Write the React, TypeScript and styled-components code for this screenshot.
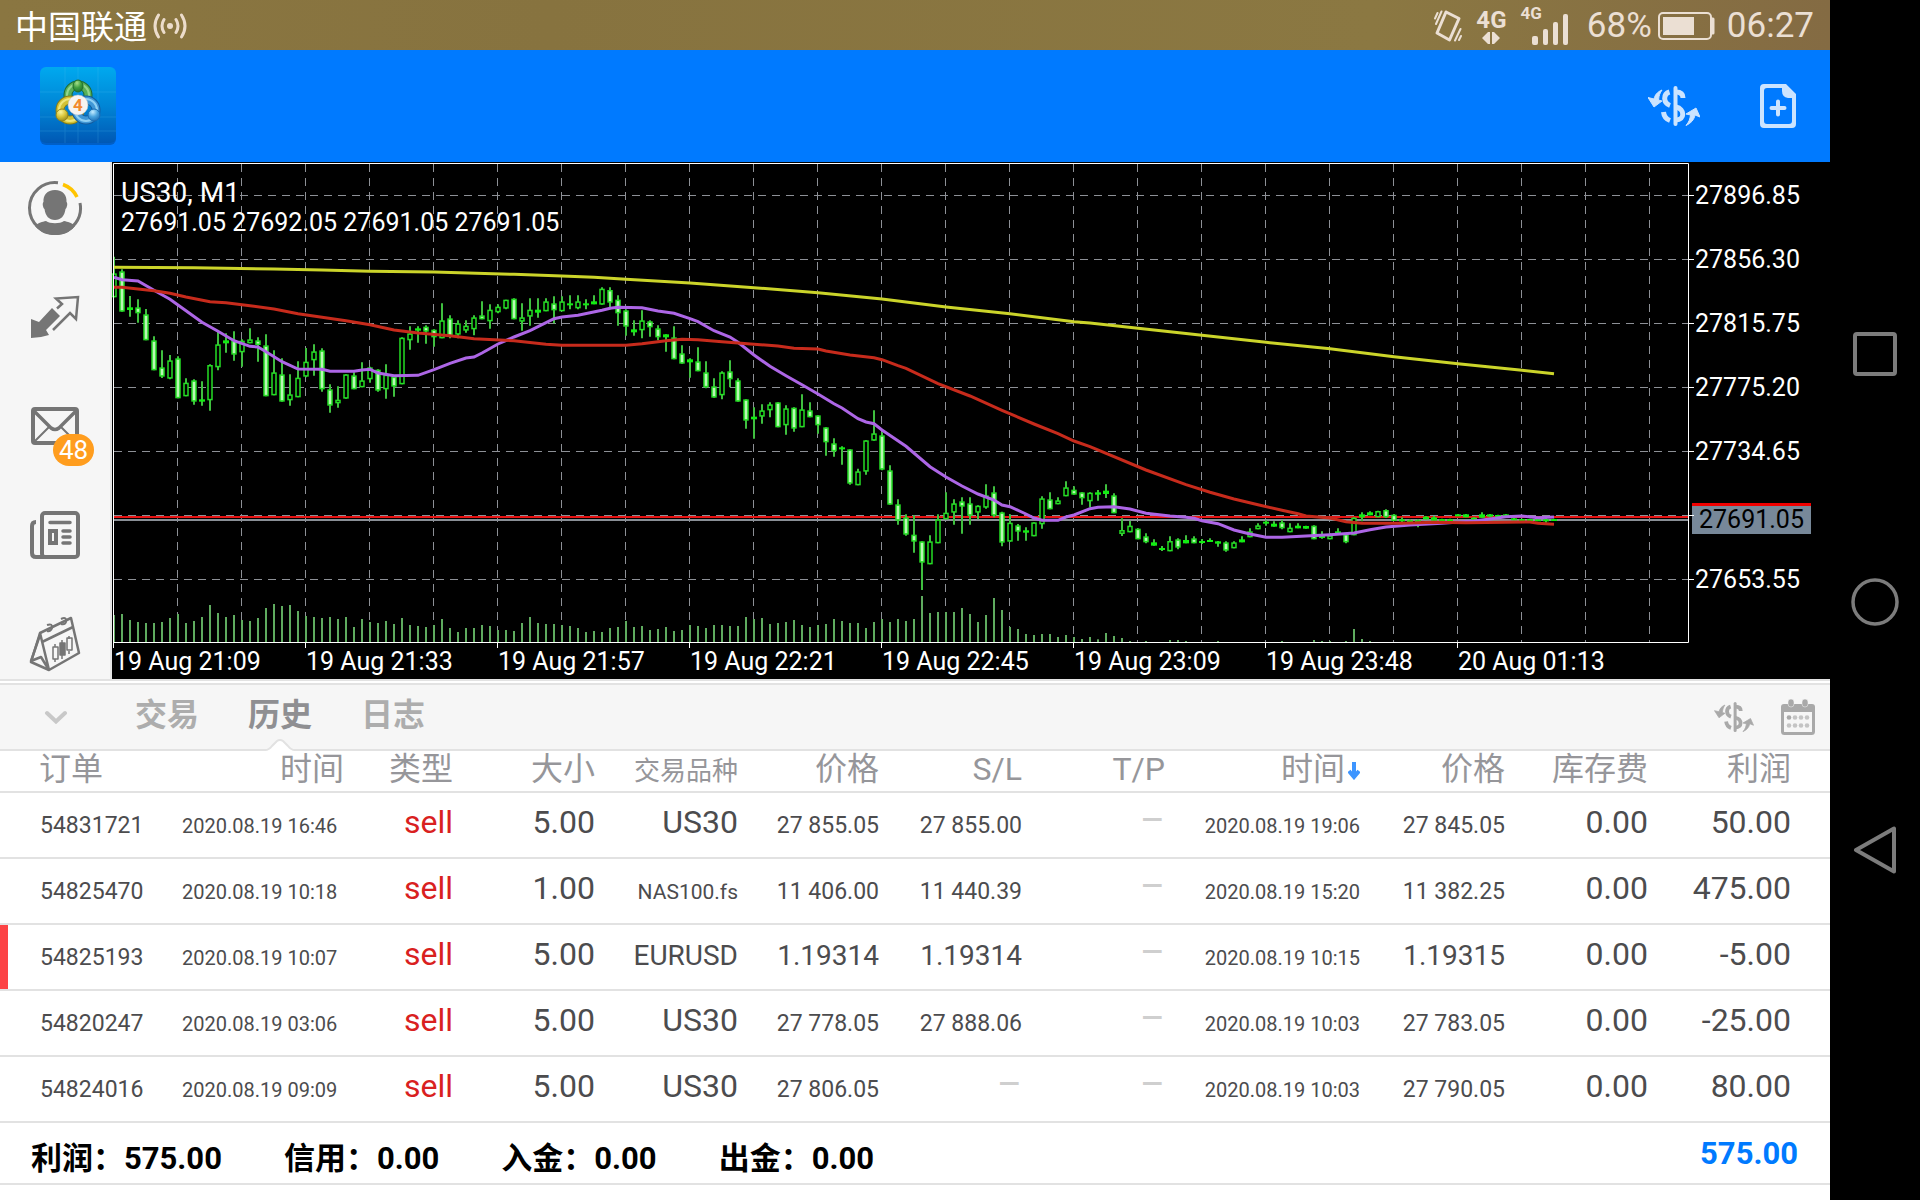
import React from "react";
import styled, { createGlobalStyle } from "styled-components";

const GlobalStyle = createGlobalStyle`
  * { box-sizing: border-box; }
  body {
    margin: 0;
    background: #000;
    font-family: Roboto, "Noto Sans CJK SC", sans-serif;
  }
  button {
    padding: 0;
    border: 0;
    background: none;
    color: inherit;
    font: inherit;
    cursor: pointer;
  }
  svg { display: block; }
`;

/* ---------- chart data ---------- */

// [high, body top, body bottom, low, kind]; levels count down from the top of
// the price pane, three to a pixel. f = falling, h = rising, s = flat.
type Kind = "f" | "h" | "s";
type Candle = [number, number, number, number, Kind];

const candles: Candle[] = [
  [20, 70, 142, 142, "h"], [58, 64, 185, 185, "f"], [138, 172, 180, 200, "s"], [148, 172, 190, 218, "f"],
  [177, 193, 271, 271, "f"], [259, 271, 361, 361, "f"], [301, 352, 380, 384, "f"], [315, 331, 386, 388, "h"],
  [319, 325, 445, 445, "f"], [385, 398, 439, 439, "h"], [388, 391, 455, 464, "f"], [394, 448, 455, 467, "s"],
  [343, 345, 451, 482, "h"], [245, 283, 352, 361, "h"], [250, 271, 280, 308, "s"], [244, 272, 314, 332, "f"],
  [268, 272, 307, 350, "h"], [235, 268, 280, 280, "h"], [262, 271, 285, 335, "f"], [253, 286, 439, 439, "f"],
  [301, 367, 436, 436, "h"], [325, 373, 455, 455, "f"], [373, 433, 451, 467, "h"], [334, 383, 442, 442, "h"],
  [294, 335, 380, 382, "h"], [283, 304, 331, 377, "h"], [295, 301, 418, 425, "f"], [403, 418, 467, 488, "f"],
  [409, 449, 460, 473, "h"], [373, 373, 446, 446, "h"], [367, 376, 418, 418, "f"], [337, 391, 412, 412, "h"],
  [350, 352, 388, 398, "h"], [358, 359, 422, 425, "f"], [343, 374, 418, 446, "h"], [377, 380, 410, 440, "f"],
  [262, 263, 403, 403, "h"], [229, 250, 271, 299, "h"], [229, 235, 242, 278, "s"], [226, 230, 245, 281, "f"],
  [238, 239, 262, 290, "f"], [160, 211, 265, 265, "h"], [196, 205, 260, 265, "f"], [211, 220, 254, 265, "h"],
  [211, 227, 242, 248, "h"], [196, 202, 238, 256, "h"], [154, 196, 208, 208, "f"], [163, 179, 214, 236, "h"],
  [163, 170, 187, 190, "h"], [149, 149, 176, 178, "h"], [145, 146, 208, 208, "f"], [160, 202, 215, 242, "h"],
  [145, 179, 200, 227, "h"], [145, 179, 188, 203, "s"], [145, 154, 184, 184, "h"], [139, 160, 181, 220, "f"],
  [139, 154, 184, 184, "h"], [136, 160, 166, 178, "s"], [136, 154, 175, 178, "h"], [148, 160, 166, 178, "s"],
  [136, 154, 163, 163, "s"], [112, 116, 164, 164, "h"], [112, 120, 158, 178, "f"], [136, 149, 190, 227, "f"],
  [178, 181, 230, 257, "f"], [211, 238, 247, 257, "s"], [181, 211, 241, 265, "h"], [211, 214, 232, 260, "f"],
  [226, 235, 262, 271, "f"], [253, 253, 262, 305, "s"], [229, 262, 328, 328, "f"], [286, 310, 341, 341, "f"],
  [325, 328, 337, 383, "s"], [292, 334, 364, 364, "f"], [334, 367, 412, 415, "f"], [385, 409, 443, 443, "f"],
  [364, 367, 436, 448, "h"], [331, 364, 388, 412, "f"], [385, 391, 455, 455, "f"], [448, 448, 512, 536, "f"],
  [472, 500, 508, 566, "s"], [463, 481, 500, 521, "h"], [457, 463, 481, 502, "h"], [457, 457, 532, 532, "f"],
  [466, 475, 526, 554, "h"], [472, 473, 536, 545, "f"], [433, 478, 532, 532, "h"], [457, 481, 502, 502, "f"],
  [496, 496, 526, 551, "f"], [532, 532, 577, 617, "f"], [565, 580, 604, 620, "f"], [589, 592, 597, 644, "s"],
  [598, 598, 701, 704, "f"], [656, 664, 706, 706, "h"], [571, 571, 665, 674, "h"], [481, 550, 572, 572, "h"],
  [547, 556, 659, 661, "f"], [646, 661, 764, 764, "f"], [748, 763, 812, 824, "f"], [793, 802, 854, 857, "f"],
  [796, 854, 875, 908, "f"], [874, 874, 938, 1020, "f"], [856, 874, 943, 943, "h"], [793, 808, 880, 880, "h"],
  [727, 788, 808, 808, "h"], [748, 760, 788, 824, "h"], [742, 754, 770, 851, "f"], [742, 760, 797, 824, "f"],
  [766, 767, 788, 808, "h"], [703, 736, 773, 776, "h"], [709, 727, 797, 802, "f"], [785, 787, 878, 889, "f"],
  [793, 818, 875, 875, "h"], [822, 826, 845, 872, "f"], [832, 841, 848, 872, "s"], [817, 817, 859, 859, "h"],
  [739, 745, 823, 836, "h"], [727, 748, 778, 778, "f"], [742, 751, 763, 763, "h"], [694, 712, 739, 739, "h"],
  [709, 719, 734, 734, "f"], [727, 727, 745, 764, "f"], [727, 728, 754, 772, "h"], [720, 727, 734, 752, "s"],
  [703, 722, 732, 744, "s"], [730, 736, 790, 790, "f"], [805, 840, 852, 858, "h"], [813, 827, 847, 847, "h"],
  [835, 836, 868, 868, "f"], [850, 859, 877, 880, "f"], [868, 877, 887, 887, "s"], [888, 894, 899, 903, "s"],
  [859, 873, 904, 904, "h"], [865, 868, 893, 898, "f"], [856, 870, 880, 880, "s"], [859, 865, 880, 880, "f"],
  [867, 873, 879, 882, "s"], [865, 870, 875, 875, "s"], [873, 874, 881, 890, "s"], [874, 877, 902, 905, "f"],
  [874, 877, 895, 895, "h"], [859, 868, 877, 877, "s"], [835, 844, 862, 862, "h"], [820, 826, 838, 838, "h"],
  [811, 815, 821, 827, "s"], [814, 821, 830, 830, "s"], [810, 817, 835, 838, "f"], [820, 833, 847, 847, "h"],
  [820, 827, 835, 835, "s"], [827, 828, 836, 836, "s"], [826, 827, 868, 868, "f"], [844, 858, 863, 866, "s"],
  [850, 856, 868, 868, "h"], [835, 844, 849, 852, "s"], [850, 852, 877, 880, "f"], [802, 803, 856, 856, "h"],
  [787, 793, 802, 814, "s"], [784, 787, 796, 796, "s"], [782, 783, 802, 802, "h"], [778, 780, 802, 804, "f"],
  [792, 794, 813, 813, "f"], [802, 808, 814, 816, "s"], [808, 811, 815, 816, "s"], [808, 811, 815, 832, "s"],
  [798, 800, 808, 808, "s"], [798, 802, 812, 812, "s"], [806, 807, 811, 811, "s"], [806, 808, 811, 811, "s"],
  [792, 793, 798, 798, "s"], [792, 793, 802, 802, "s"], [802, 803, 808, 808, "s"], [787, 793, 803, 803, "s"],
  [792, 793, 800, 802, "s"], [794, 795, 798, 798, "s"], [792, 793, 797, 797, "s"], [804, 805, 811, 811, "s"],
  [806, 807, 810, 810, "s"], [806, 807, 810, 810, "s"], [806, 808, 812, 812, "s"], [804, 808, 814, 818, "s"],
  [806, 807, 811, 811, "s"],
];

// Height of each volume bar, three to a pixel.
const volumes = [
  81, 84, 66, 60, 57, 57, 60, 72, 84, 57, 63, 75, 111, 87, 75, 81, 66, 63, 72, 102, 114, 108, 111, 93, 78, 75, 72, 75,
  69, 75, 45, 69, 60, 57, 63, 54, 72, 51, 48, 45, 51, 69, 42, 30, 42, 42, 51, 48, 36, 36, 33, 57, 75, 57, 54, 54, 51,
  48, 42, 30, 33, 30, 42, 45, 63, 45, 48, 36, 39, 45, 33, 36, 51, 48, 42, 51, 51, 48, 48, 75, 69, 72, 54, 57, 60, 66,
  51, 45, 51, 54, 69, 63, 57, 57, 42, 60, 69, 60, 69, 63, 69, 138, 87, 90, 90, 90, 102, 84, 60, 81, 132, 96, 45, 39,
  24, 21, 24, 24, 15, 21, 15, 9, 15, 8, 27, 18, 12, 3, 0, 3, 0, 0, 6, 6, 3, 0, 0, 0, 3, 0, 0, 0, 0, 0, 0, 0, 3, 0, 0,
  0, 6, 3, 3, 0, 3, 39, 9, 3,
];

// Moving averages as [bar, level] pairs.
type Points = [number, number][];

const slowAverage: Points = [
  [0, 52], [10, 53], [20, 57], [26, 60], [32, 64], [40, 66], [50, 73], [56, 78], [60, 82], [64, 88], [72, 99],
  [80, 113], [88, 128], [96, 147], [104, 171], [112, 191], [120, 215], [122, 219], [144, 277], [152, 296],
  [160, 320], [168, 341], [176, 361], [180, 371],
];

const middleAverage: Points = [
  [0, 112], [1, 112], [3, 117], [5, 122], [7, 130], [9, 141], [12, 155], [14, 158], [17, 167], [20, 177], [23, 191],
  [26, 202], [29, 212], [32, 224], [35, 240], [38, 249], [42, 257], [45, 266], [50, 272], [54, 283], [56, 286],
  [64, 286], [66, 281], [69, 272], [71, 268], [73, 269], [76, 275], [80, 283], [83, 288], [85, 295], [88, 297],
  [89, 303], [92, 315], [95, 323], [96, 329], [98, 347], [99, 355], [103, 401], [107, 438], [111, 481], [115, 522],
  [118, 551], [120, 573], [122, 590], [129, 660], [134, 704], [137, 727], [140, 747], [143, 764], [146, 781],
  [148, 791], [149, 798], [152, 804], [154, 815], [156, 820], [161, 820], [165, 817], [169, 818], [177, 816],
  [178, 820], [180, 823],
];

const fastAverage: Points = [
  [0, 82], [1, 89], [3, 93], [5, 121], [7, 148], [9, 182], [11, 217], [13, 244], [15, 272], [17, 289], [18, 291],
  [19, 305], [21, 335], [23, 357], [26, 358], [27, 364], [30, 364], [31, 360], [32, 358], [33, 369], [35, 377],
  [38, 376], [40, 359], [42, 340], [44, 324], [45, 321], [46, 309], [48, 282], [50, 261], [52, 242], [55, 206],
  [56, 201], [58, 196], [61, 181], [62, 175], [63, 172], [66, 173], [68, 183], [70, 190], [72, 206], [73, 215],
  [74, 229], [75, 242], [77, 261], [78, 277], [80, 315], [82, 349], [84, 377], [86, 404], [88, 432], [90, 461],
  [91, 474], [93, 506], [94, 516], [95, 521], [96, 540], [99, 589], [102, 650], [104, 681], [106, 708], [108, 732],
  [110, 750], [111, 765], [112, 770], [114, 792], [115, 804], [116, 811], [118, 811], [119, 801], [120, 795],
  [122, 776], [123, 772], [125, 770], [127, 777], [129, 790], [132, 798], [134, 802], [135, 805], [136, 812],
  [138, 821], [140, 840], [142, 852], [144, 862], [146, 862], [149, 858], [152, 854], [155, 849], [157, 839],
  [159, 831], [162, 825], [166, 820], [170, 813], [172, 807], [174, 800], [176, 798], [178, 803], [180, 801],
];

const PLOT_W = 1582;
const PLOT_H = 486;
const FRAME_RIGHT = 1577;
const FRAME_BOTTOM = 480;
const barX = (i: number) => 2 + 8 * i;
const levelY = (level: number) => 88 + level / 3;
const linePoints = (pts: Points) => pts.map(([i, v]) => `${barX(i)},${levelY(v).toFixed(1)}`).join(" ");
const range = (n: number) => Array.from({ length: n }, (_, i) => i);

const priceLabels = ["27896.85", "27856.30", "27815.75", "27775.20", "27734.65", null, "27653.55"];
const timeLabels = [
  "19 Aug 21:09", "19 Aug 21:33", "19 Aug 21:57", "19 Aug 22:21",
  "19 Aug 22:45", "19 Aug 23:09", "19 Aug 23:48", "20 Aug 01:13",
];

/* ---------- order data ---------- */

type Order = {
  id: string; opened: string; size: string; symbol: string; open: string; sl: string | null;
  closed: string; close: string; profit: string; loss?: boolean;
};

const orders: Order[] = [
  { id: "54831721", opened: "2020.08.19 16:46", size: "5.00", symbol: "US30", open: "27 855.05", sl: "27 855.00", closed: "2020.08.19 19:06", close: "27 845.05", profit: "50.00" },
  { id: "54825470", opened: "2020.08.19 10:18", size: "1.00", symbol: "NAS100.fs", open: "11 406.00", sl: "11 440.39", closed: "2020.08.19 15:20", close: "11 382.25", profit: "475.00" },
  { id: "54825193", opened: "2020.08.19 10:07", size: "5.00", symbol: "EURUSD", open: "1.19314", sl: "1.19314", closed: "2020.08.19 10:15", close: "1.19315", profit: "-5.00", loss: true },
  { id: "54820247", opened: "2020.08.19 03:06", size: "5.00", symbol: "US30", open: "27 778.05", sl: "27 888.06", closed: "2020.08.19 10:03", close: "27 783.05", profit: "-25.00" },
  { id: "54824016", opened: "2020.08.19 09:09", size: "5.00", symbol: "US30", open: "27 806.05", sl: null, closed: "2020.08.19 10:03", close: "27 790.05", profit: "80.00" },
];

const columnWidths = [182, 162, 109, 142, 143, 141, 143, 143, 195, 145, 143, 182];

const summary = [
  ["利润", "575.00"],
  ["信用", "0.00"],
  ["入金", "0.00"],
  ["出金", "0.00"],
];

/* ---------- layout ---------- */

const Device = styled.div`
  display: grid;
  grid-template-columns: minmax(0, 1fr) 90px;
  min-height: 100vh;
  background: #000;
`;

const Screen = styled.div`
  display: flex;
  flex-direction: column;
  min-width: 0;
  background: #fff;
`;

const StatusBar = styled.div`
  display: flex;
  align-items: center;
  justify-content: space-between;
  height: 50px;
  padding: 2px 16px 0 15px;
  background: linear-gradient(90deg, #8a7641, #87733f 30%, #8b7842 75%, #846b43);
  color: #ebdfd3;
  font-size: 35px;
  line-height: 40px;
`;

const StatusGroup = styled.div`
  display: flex;
  align-items: center;
  gap: 6px;
`;

const Carrier = styled.span`
  padding-top: 4px;
  color: #fff;
  font-size: 33px;
`;

const StatusIcons = styled.div`
  display: flex;
  align-items: center;
  gap: 14px;
  margin-right: 13px;
`;

const BatteryGroup = styled.div`
  display: flex;
  align-items: center;
  gap: 6px;
  margin-right: 6px;
`;

const AppBar = styled.header`
  display: flex;
  align-items: center;
  justify-content: space-between;
  height: 112px;
  padding: 0 34px 0 40px;
  background: #007aff;
`;

const AppActions = styled.div`
  display: flex;
  align-items: center;
  gap: 60px;
  color: #cce4ff;
`;

const Workspace = styled.div`
  display: grid;
  grid-template-columns: 112px minmax(0, 1fr);
`;

const Sidebar = styled.nav`
  display: flex;
  flex-direction: column;
  align-items: center;
  gap: 53px;
  padding-top: 18px;
  border-right: 2px solid #e6e6e6;
  background: #f6f6f6;
  color: #757575;
`;

const SideButton = styled.button`
  position: relative;
  height: 56px;
`;

const Badge = styled.span`
  position: absolute;
  left: 26px;
  top: 36px;
  min-width: 41px;
  padding: 0 6px;
  border-radius: 16px;
  background: #ff9d1e;
  color: #fff;
  font-size: 26px;
  line-height: 32px;
`;

const ChartPanel = styled.section`
  display: grid;
  grid-template-columns: minmax(0, 1fr) 136px;
  grid-template-rows: auto 31px;
  background: #000;
  color: #fff;
  font-size: 25px;
`;

const Plot = styled.div`
  position: relative;
  svg { width: 100%; height: ${PLOT_H}px; }
`;

const ChartTitle = styled.div`
  position: absolute;
  left: 9px;
  top: 16px;
  line-height: 30px;
`;

const SymbolName = styled.div`
  font-size: 28px;
`;

const PriceAxis = styled.div`
  display: flex;
  flex-direction: column;
  padding: 2px 0 0 1px;
`;

const PriceLabel = styled.div`
  height: 64px;
  line-height: 64px;
`;

const PriceSlot = styled.div`
  display: flex;
  height: 64px;
  padding-top: 19px;
`;

const PriceMarker = styled.div`
  height: 31px;
  margin-left: -3px;
  padding: 0 7px;
  border-top: 3px solid #f00000;
  background: #778899;
  color: #000;
  line-height: 28px;
`;

const TimeAxis = styled.div`
  display: grid;
  grid-template-columns: repeat(8, 192px);
  padding-left: 2px;
  line-height: 28px;
  white-space: nowrap;
`;

const HistoryPanel = styled.section`
  flex: 1;
  padding-top: 2px;
  border-top: 2px solid #e2e2e2;
`;

const TabBar = styled.div`
  display: flex;
  align-items: center;
  height: 68px;
  padding: 0 15px 0 44px;
  border-top: 2px solid #e2e2e2;
  border-bottom: 2px solid #e2e2e2;
  background: #f6f6f6;
  color: #c8c8c8;
`;

const Tabs = styled.div`
  display: flex;
  flex: 1;
  align-self: stretch;
  gap: 49px;
  margin-left: 67px;
`;

const Tab = styled.button<{ $active?: boolean }>`
  position: relative;
  padding-bottom: 4px;
  color: ${(p) => (p.$active ? "#8f8f92" : "#adadad")};
  font-size: 32px;
  font-weight: 700;
  line-height: 40px;
`;

const Notch = styled.svg`
  position: absolute;
  left: 17px;
  bottom: -2px;
`;

const TabActions = styled.div`
  display: flex;
  align-items: center;
  gap: 27px;
  color: #a9a9a9;
`;

const OrderTable = styled.table`
  width: 100%;
  table-layout: fixed;
  border-collapse: separate;
  border-spacing: 0;
  color: #4c4c4e;
`;

const HeadCell = styled.th<{ $align?: string; $size?: number }>`
  height: 42px;
  padding: 1px 0 3px;
  border-bottom: 2px solid #e2e2e2;
  color: #96969a;
  font-size: ${(p) => p.$size ?? 32}px;
  font-weight: 400;
  line-height: 34px;
  text-align: ${(p) => p.$align ?? "right"};
  vertical-align: baseline;
  white-space: nowrap;
  &:first-child { padding-left: 39px; }
  &:last-child { padding-right: 39px; }
`;

const SortArrow = styled.svg`
  display: inline-block;
  margin-left: 3px;
`;

const Cell = styled.td<{ $align?: string; $size?: number; $tone?: string }>`
  padding: 9px 0 15px;
  border-bottom: 2px solid #e2e2e2;
  color: ${(p) => p.$tone ?? "inherit"};
  font-size: ${(p) => p.$size ?? 32}px;
  line-height: ${(p) => (p.$size ? 24 : 40)}px;
  text-align: ${(p) => p.$align ?? "right"};
  vertical-align: baseline;
  white-space: nowrap;
  &:last-child { padding-right: 39px; }
`;

const OrderCell = styled(Cell)<{ $loss?: boolean }>`
  padding-left: 40px;
  box-shadow: ${(p) => (p.$loss ? "inset 8px 0 0 #fc4345" : "none")};
`;

const Summary = styled.footer`
  display: flex;
  gap: 62px;
  height: 62px;
  padding: 13px 32px 0 31px;
  border-bottom: 2px solid #e2e2e2;
  color: #000;
  font-size: 31px;
  font-weight: 700;
  line-height: 46px;
`;

const Total = styled.span`
  margin-left: auto;
  color: #007aff;
  line-height: 36px;
`;

const SystemNav = styled.nav`
  display: flex;
  flex-direction: column;
  align-items: center;
  justify-content: center;
  gap: 200px;
  padding-top: 4px;
  color: #7c7c7c;
`;

/* ---------- icons ---------- */

const BroadcastIcon = () => (
  <svg width="34" height="28" viewBox="0 0 34 28" fill="none" stroke="#ecdccb" strokeWidth="3" strokeLinecap="round">
    <circle cx="17" cy="14" r="3" fill="#ecdccb" stroke="none" />
    <path d="M11 7.500Q7 14 11 20.500M23 7.500Q27 14 23 20.500M5.500 3Q-1.500 14 5.500 25M28.500 3Q35.500 14 28.500 25" />
  </svg>
);

const VibrateIcon = () => (
  <svg width="28" height="34" viewBox="0 0 28 34" fill="none" stroke="currentColor" strokeLinecap="round" strokeLinejoin="round">
    <path d="M12 3L25 9.500L15.500 31L3 24Z" strokeWidth="3" />
    <path d="M7.500 2.500L2 15M3.500 4L1 9.500M26.500 20L21 31.500M27 27L25 31" strokeWidth="2" />
  </svg>
);

const Network = styled.div`
  display: flex;
  flex-direction: column;
  align-items: center;
  font-size: 24px;
  font-weight: 700;
  line-height: 24px;
`;

const DataArrows = () => (
  <svg width="20" height="12" viewBox="0 0 20 12" fill="currentColor">
    <path d="M1 6L7 0H9V12H7ZM11 0H13L19 6L13 12H11Z" />
  </svg>
);

const Signal = styled.div`
  display: flex;
  align-items: flex-end;
  height: 40px;
  font-size: 17px;
  font-weight: 700;
`;

const SignalLabel = styled.span`
  align-self: flex-start;
  margin-right: -10px;
  line-height: 14px;
`;

const SignalBars = () => (
  <svg width="36" height="32" viewBox="0 0 36 32" fill="currentColor">
    <rect x="0" y="22" width="6" height="9" rx="2" />
    <rect x="11" y="15" width="5" height="16" rx="2" />
    <rect x="21" y="8" width="5" height="23" rx="2" />
    <rect x="31" y="0" width="5" height="31" rx="2" />
  </svg>
);

const BatteryIcon = () => (
  <svg width="57" height="28" viewBox="0 0 57 28" fill="none" stroke="currentColor" strokeWidth="2">
    <rect x="1" y="1" width="52" height="26" rx="4" />
    <rect x="5" y="5" width="31" height="18" fill="currentColor" stroke="none" />
    <path d="M53 7H55V21H53" strokeWidth="3" strokeLinejoin="round" />
  </svg>
);

const LogoIcon = () => (
  <svg width="76" height="78" viewBox="0 0 76 78" role="img" aria-label="MetaTrader 4">
    <defs>
      <linearGradient id="sky" x1="0" y1="0" x2="0" y2="1">
        <stop offset="0" stopColor="#00a9ef" />
        <stop offset="0.500" stopColor="#0086d6" />
        <stop offset="1" stopColor="#0058b4" />
      </linearGradient>
      <radialGradient id="green" cx="0.400" cy="0.250" r="0.800">
        <stop offset="0" stopColor="#a8e08a" />
        <stop offset="0.500" stopColor="#3f9f3f" />
        <stop offset="1" stopColor="#1f6f2c" />
      </radialGradient>
      <radialGradient id="gold" cx="0.400" cy="0.250" r="0.800">
        <stop offset="0" stopColor="#fbf6a0" />
        <stop offset="0.500" stopColor="#d9c63a" />
        <stop offset="1" stopColor="#93861c" />
      </radialGradient>
      <radialGradient id="blue" cx="0.400" cy="0.250" r="0.800">
        <stop offset="0" stopColor="#c4ecff" />
        <stop offset="0.500" stopColor="#4aa4de" />
        <stop offset="1" stopColor="#1c6db4" />
      </radialGradient>
    </defs>
    <rect y="2" width="76" height="76" rx="6" fill="#00438f" opacity="0.500" />
    <rect width="76" height="76" rx="6" fill="url(#sky)" />
    <path d="M0 25H76M0 50H76M0 64H76M25 0V76M38 0V76M58 0V76" stroke="#5ec4f2" opacity="0.200" />
    <g fill="none">
      <circle cx="38" cy="28" r="10" stroke="#1e6a34" strokeWidth="9" />
      <circle cx="38" cy="28" r="10" stroke="#58b058" strokeWidth="7" />
      <circle cx="38" cy="28" r="11" stroke="#93d68c" strokeWidth="2" />
      <circle cx="30" cy="43" r="10" stroke="#857a16" strokeWidth="9" />
      <circle cx="30" cy="43" r="10" stroke="#d3c234" strokeWidth="7" />
      <circle cx="30" cy="43" r="11" stroke="#efe67a" strokeWidth="2" />
      <circle cx="46" cy="43" r="10" stroke="#135a9c" strokeWidth="9" />
      <circle cx="46" cy="43" r="10" stroke="#4097d6" strokeWidth="7" />
      <circle cx="46" cy="43" r="11" stroke="#8fd0f4" strokeWidth="2" />
    </g>
    <ellipse cx="38" cy="19" rx="5" ry="6" fill="url(#green)" stroke="#1f6f2c" />
    <circle cx="22" cy="48" r="6" fill="url(#gold)" stroke="#93861c" />
    <circle cx="54" cy="48" r="6" fill="url(#blue)" stroke="#1c6db4" />
    <circle cx="38" cy="38" r="10" fill="#f6f3f0" stroke="#c9c9c9" strokeWidth="0.500" />
    <text x="38" y="44" textAnchor="middle" fontFamily="Roboto" fontSize="17" fontWeight="700" fill="#f28a2e">
      4
    </text>
  </svg>
);

const TradeIcon = ({ width, height }: { width: number; height: number }) => (
  <svg width={width} height={height} viewBox="0 0 52 40" fill="none" stroke="currentColor">
    <path d="M27.500 2V38" strokeWidth="4" strokeLinecap="round" />
    <path
      d="M28 6C33 6 35 8 35 12M21.500 6C15 8 15 17 22 19.500M28 21C37 23 37 34 28 34M15.500 26C16 31 18 33 22 34.500"
      strokeWidth="5"
    />
    <path d="M14 4C9 6 7 9 6 13L0 11.500L6 21L14 15L10.500 14C11 9 12 7 14 4Z" fill="currentColor" />
    <path d="M38 39.500C43 37 46 34 47 29L52 31L48 22L38 28L42.500 29C42 33 41 36 38 39.500Z" fill="currentColor" />
  </svg>
);

const NewOrderIcon = () => (
  <svg width="36" height="44" viewBox="0 0 36 44">
    <path
      fill="currentColor"
      fillRule="evenodd"
      d="M4 0H26L36 10V40Q36 44 32 44H4Q0 44 0 40V4Q0 0 4 0ZM7 4Q4 4 4 7V37Q4 40 7 40H29Q32 40 32 37V14H28Q22 13 22 7V4Z"
    />
    <path d="M18 17.500V30.500M11.500 24H24.500" stroke="currentColor" strokeWidth="4" strokeLinecap="round" />
  </svg>
);

const AccountIcon = () => (
  <svg width="56" height="56" viewBox="0 0 56 56" fill="none">
    <path d="M31 2.700A25.500 25.500 0 1 0 53 23" stroke="currentColor" strokeWidth="3" />
    <path d="M36 4.500A25 25 0 0 1 50 17" stroke="#ffc400" strokeWidth="3.500" />
    <path
      fill="currentColor"
      d="M28 10C36 10 40 15 39.500 22C41 23 40 28 38.500 29C37.500 36 34 40 28 40C22 40 18.500 36 17.500 29C16 28 15 23 16.500 22C16 15 20 10 28 10ZM8 46C12 42 15 42 19 41C23 44 33 44 37 41C41 42 44 42 48 46C42 53 36 55 28 55C20 55 14 53 8 46Z"
    />
  </svg>
);

const ArrowsIcon = () => (
  <svg width="56" height="56" viewBox="0 0 56 56">
    <path fill="currentColor" d="M4 30L12 33L25 19L33 27L19 41L22 46Q13 49 4 49Z" />
    <path
      d="M26 41L43 24L49 30L51 8L29 9.500L35 15L30 19.500"
      fill="none"
      stroke="currentColor"
      strokeWidth="2.500"
    />
  </svg>
);

const MailIcon = () => (
  <svg width="56" height="56" viewBox="0 0 56 56" fill="none" stroke="currentColor">
    <rect x="6" y="11" width="44" height="34" rx="2" strokeWidth="4" />
    <path d="M7 13L24 30Q28 33 32 30L49 13" strokeWidth="3.500" />
    <path d="M7 44L22 29M34 29L49 44" strokeWidth="2" />
  </svg>
);

const NewsIcon = () => (
  <svg width="56" height="56" viewBox="0 0 56 56" fill="none" stroke="currentColor" strokeWidth="4">
    <rect x="15" y="6" width="36" height="44" rx="3" />
    <path d="M9 15Q5 15 5 19V46Q5 50 9 50H20" />
    <path d="M23 15.500H43M36 24H43M36 30H43M36 36H43" strokeLinecap="round" strokeWidth="3.500" />
    <rect x="23" y="24" width="6" height="12" />
  </svg>
);

const EventsIcon = () => (
  <svg width="56" height="56" viewBox="0 0 56 56" fill="none" stroke="currentColor" strokeWidth="2.500" strokeLinejoin="round">
    <path d="M13 17L44 2L52 37L22 54L4 46Z" />
    <path d="M13 17L22 54M15 26L46 11M13 19L4 45L14 41L22 54" />
    <path d="M20 9Q26 7 25 12Q24 16 20 15M34 3Q40 0 39 6Q38 9 34 8" strokeWidth="2" />
    <path d="M28 28V31M28 43V46M35 24V43M42 20V23M42 35V38" strokeWidth="1.500" />
    <rect x="26" y="31" width="5" height="12" strokeWidth="1.500" />
    <rect x="33" y="27" width="5" height="12" strokeWidth="1.500" fill="currentColor" />
    <rect x="40" y="22" width="5" height="12" strokeWidth="1.500" />
  </svg>
);

const ChevronIcon = () => (
  <svg width="24" height="14" viewBox="0 0 24 14" fill="none" stroke="currentColor" strokeWidth="4" strokeLinecap="round">
    <path d="M3 3L12 11.500L21 3" />
  </svg>
);

const PeriodIcon = () => (
  <svg width="34" height="36" viewBox="0 0 34 36">
    <rect x="1.500" y="8" width="31" height="26.500" rx="2" fill="#f6f6f6" stroke="currentColor" strokeWidth="3" />
    <path d="M0 13V8Q0 5 3 5H31Q34 5 34 8V13Z" fill="currentColor" />
    <rect x="7" y="0" width="6" height="8" rx="3" fill="currentColor" stroke="#f6f6f6" strokeWidth="0.500" />
    <rect x="21" y="0" width="6" height="8" rx="3" fill="currentColor" stroke="#f6f6f6" strokeWidth="0.500" />
    {[8, 14, 20, 26].map((x) => (
      <g key={x} fill={x === 8 ? "currentColor" : "#c4c4c4"}>
        <circle cx={x} cy="18.500" r="2.300" />
        <circle cx={x} cy="26.500" r="2.300" fill="#c4c4c4" />
      </g>
    ))}
  </svg>
);

/* ---------- chart ---------- */

const PriceChart = () => (
  <svg viewBox={`0 0 ${PLOT_W} ${PLOT_H}`} preserveAspectRatio="none" role="img" aria-label="US30, M1">
    <g stroke="#8d9096" strokeDasharray="8 6">
      {range(24).map((k) => (
        <line key={`v${k}`} x1={65.5 + 64 * k} x2={65.5 + 64 * k} y1="2" y2={FRAME_BOTTOM} />
      ))}
      {range(7).map((k) => (
        <line key={`h${k}`} x1="2" x2={FRAME_RIGHT} y1={33.5 + 64 * k} y2={33.5 + 64 * k} />
      ))}
    </g>
    <g fill="#5fab5f">
      {volumes.map((v, i) => (
        <rect key={i} x={barX(i) - 1} y={FRAME_BOTTOM - v / 3} width="2" height={v / 3} />
      ))}
    </g>
    <rect x="2" y="354" width={FRAME_RIGHT - 2} height="2" fill="#e81414" />
    <rect x="2" y="357" width={FRAME_RIGHT - 2} height="2" fill="#8a8f96" />
    {candles.map(([high, top, bottom, low, kind], i) => {
      const x = barX(i);
      return (
        <g key={i}>
          <line x1={x} x2={x} y1={levelY(high)} y2={levelY(low)} stroke="#3fbf3f" strokeWidth="2" />
          {kind === "s" ? (
            <rect x={x - 3} y={levelY(top)} width="6" height={Math.max((bottom - top) / 3, 2)} fill="#12ee12" />
          ) : (
            <rect
              x={x - 2}
              y={levelY(top) + 0.75}
              width="4"
              height={Math.max((bottom - top) / 3 - 1.5, 1)}
              fill={kind === "f" ? "#b9f7b4" : "#000"}
              stroke="#25dd25"
              strokeWidth="1.5"
            />
          )}
        </g>
      );
    })}
    <g fill="none" strokeWidth="3">
      <polyline points={linePoints(slowAverage)} stroke="#cbd42a" />
      <polyline points={linePoints(fastAverage)} stroke="#ad66e6" />
      <polyline points={linePoints(middleAverage)} stroke="#c72b1c" />
    </g>
    <g stroke="#fff" fill="none">
      <path d={`M1.500 ${PLOT_H}V1.500H${FRAME_RIGHT - 0.5}V${FRAME_BOTTOM}.500H1`} />
      {range(8).map((k) => (
        <line key={`t${k}`} x1={1.5 + 192 * k} x2={1.5 + 192 * k} y1={FRAME_BOTTOM} y2={PLOT_H} />
      ))}
      {range(7).map((k) => (
        <line key={`p${k}`} x1={FRAME_RIGHT} x2={PLOT_W} y1={33.5 + 64 * k} y2={33.5 + 64 * k} />
      ))}
    </g>
  </svg>
);

const priceSize = (value: string) => (value.length > 7 ? 23 : 28);
const symbolSize = (value: string) => (value.length > 6 ? 21 : value.length > 4 ? 28 : undefined);

const NoValue = () => <Cell $tone="#cfcfcf" $size={38}>–</Cell>;

export default function App() {
  return (
    <>
      <GlobalStyle />
      <Device>
        <Screen>
          <StatusBar>
            <StatusGroup>
              <Carrier>中国联通</Carrier>
              <BroadcastIcon />
            </StatusGroup>
            <StatusGroup>
              <StatusIcons>
                <VibrateIcon />
                <Network>
                  4G
                  <DataArrows />
                </Network>
                <Signal>
                  <SignalLabel>4G</SignalLabel>
                  <SignalBars />
                </Signal>
              </StatusIcons>
              <BatteryGroup>
                68%
                <BatteryIcon />
              </BatteryGroup>
              <span>06:27</span>
            </StatusGroup>
          </StatusBar>

          <AppBar>
            <LogoIcon />
            <AppActions>
              <button aria-label="交易">
                <TradeIcon width={52} height={40} />
              </button>
              <button aria-label="新订单">
                <NewOrderIcon />
              </button>
            </AppActions>
          </AppBar>

          <Workspace>
            <Sidebar>
              <SideButton aria-label="账户"><AccountIcon /></SideButton>
              <SideButton aria-label="交易"><ArrowsIcon /></SideButton>
              <SideButton aria-label="邮箱">
                <MailIcon />
                <Badge>48</Badge>
              </SideButton>
              <SideButton aria-label="新闻"><NewsIcon /></SideButton>
              <SideButton aria-label="日历"><EventsIcon /></SideButton>
            </Sidebar>
            <ChartPanel>
              <Plot>
                <PriceChart />
                <ChartTitle>
                  <SymbolName>US30, M1</SymbolName>
                  27691.05 27692.05 27691.05 27691.05
                </ChartTitle>
              </Plot>
              <PriceAxis>
                {priceLabels.map((label, i) =>
                  label ? (
                    <PriceLabel key={i}>{label}</PriceLabel>
                  ) : (
                    <PriceSlot key={i}>
                      <PriceMarker>27691.05</PriceMarker>
                    </PriceSlot>
                  ),
                )}
              </PriceAxis>
              <TimeAxis>
                {timeLabels.map((label) => (
                  <span key={label}>{label}</span>
                ))}
              </TimeAxis>
            </ChartPanel>
          </Workspace>

          <HistoryPanel>
            <TabBar>
              <button aria-label="收起"><ChevronIcon /></button>
              <Tabs>
                <Tab>交易</Tab>
                <Tab $active>
                  历史
                  <Notch width="30" height="12" viewBox="0 0 30 12">
                    <path d="M0 12Q4 11 7 7L12 2Q15 0 18 2L23 7Q26 11 30 12Z" fill="#fff" />
                    <path d="M0 11Q4 11 7 7L12 2Q15 0 18 2L23 7Q26 11 30 11" fill="none" stroke="#e2e2e2" strokeWidth="2" />
                  </Notch>
                </Tab>
                <Tab>日志</Tab>
              </Tabs>
              <TabActions>
                <button aria-label="交易"><TradeIcon width={40} height={30} /></button>
                <button aria-label="时段"><PeriodIcon /></button>
              </TabActions>
            </TabBar>
            <OrderTable>
              <colgroup>
                {columnWidths.map((width, i) => (
                  <col key={i} width={width} />
                ))}
              </colgroup>
              <thead>
                <tr>
                  <HeadCell $align="left">订单</HeadCell>
                  <HeadCell>时间</HeadCell>
                  <HeadCell>类型</HeadCell>
                  <HeadCell>大小</HeadCell>
                  <HeadCell $size={26}>交易品种</HeadCell>
                  <HeadCell>价格</HeadCell>
                  <HeadCell>S/L</HeadCell>
                  <HeadCell>T/P</HeadCell>
                  <HeadCell>
                    时间
                    <SortArrow width="12" height="18" viewBox="0 0 12 18" fill="none" stroke="#3d95ff" strokeWidth="4">
                      <path d="M6 0V14M1 9L6 15L11 9" />
                    </SortArrow>
                  </HeadCell>
                  <HeadCell>价格</HeadCell>
                  <HeadCell>库存费</HeadCell>
                  <HeadCell>利润</HeadCell>
                </tr>
              </thead>
              <tbody>
                {orders.map((o) => (
                  <tr key={o.id}>
                    <OrderCell $align="left" $size={23} $loss={o.loss}>{o.id}</OrderCell>
                    <Cell $align="left" $size={20}>{o.opened}</Cell>
                    <Cell $tone="#d92020">sell</Cell>
                    <Cell>{o.size}</Cell>
                    <Cell $size={symbolSize(o.symbol)}>{o.symbol}</Cell>
                    <Cell $size={priceSize(o.open)}>{o.open}</Cell>
                    {o.sl ? <Cell $size={priceSize(o.sl)}>{o.sl}</Cell> : <NoValue />}
                    <NoValue />
                    <Cell $size={20}>{o.closed}</Cell>
                    <Cell $size={priceSize(o.close)}>{o.close}</Cell>
                    <Cell>0.00</Cell>
                    <Cell>{o.profit}</Cell>
                  </tr>
                ))}
              </tbody>
            </OrderTable>
            <Summary>
              {summary.map(([label, value]) => (
                <span key={label}>{label}：{value}</span>
              ))}
              <Total>575.00</Total>
            </Summary>
          </HistoryPanel>
        </Screen>

        <SystemNav>
          <button aria-label="最近任务">
            <svg width="48" height="48" viewBox="0 0 48 48" fill="none" stroke="currentColor" strokeWidth="4">
              <rect x="4" y="4" width="40" height="40" rx="2" />
            </svg>
          </button>
          <button aria-label="主屏幕">
            <svg width="48" height="48" viewBox="0 0 48 48" fill="none" stroke="currentColor" strokeWidth="3.500">
              <circle cx="24" cy="24" r="22" />
            </svg>
          </button>
          <button aria-label="返回">
            <svg width="48" height="48" viewBox="0 0 48 48" fill="none" stroke="currentColor" strokeWidth="4" strokeLinejoin="round">
              <path d="M5 24L43 2.500V45.500Z" />
            </svg>
          </button>
        </SystemNav>
      </Device>
    </>
  );
}
